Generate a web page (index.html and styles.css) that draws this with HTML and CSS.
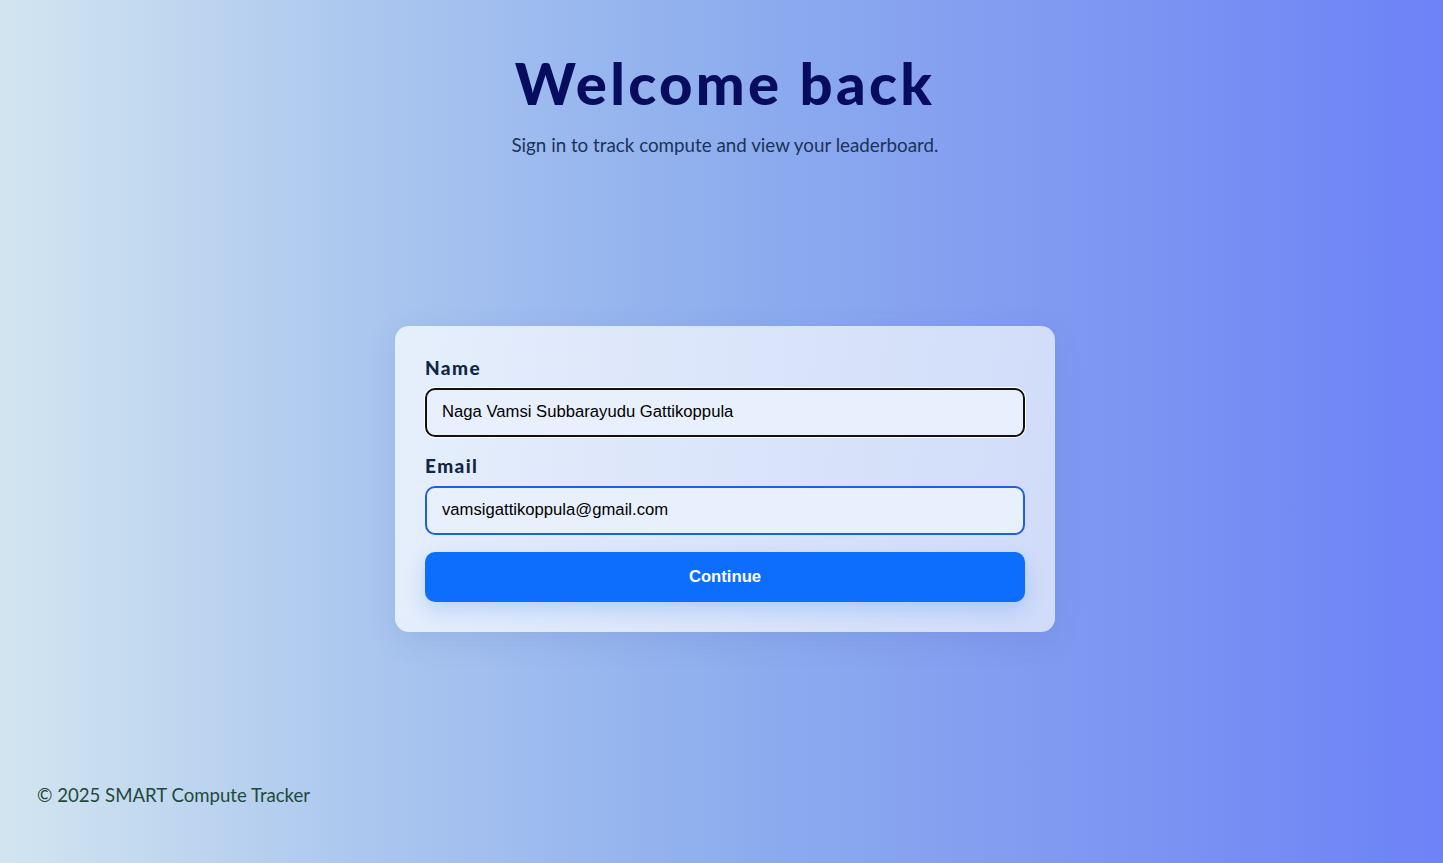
FILE: index.html
```html
<!DOCTYPE html>
<html lang="en">
<head>
<meta charset="utf-8">
<title>Welcome back</title>
<link rel="stylesheet" href="styles.css">
</head>
<body>
<div class="page">
  <header class="hero">
    <h1 class="title">Welcome back</h1>
    <p class="subtitle">Sign in to track compute and view your leaderboard.</p>
  </header>
  <main class="main">
    <form class="card">
      <label class="label" for="name">Name</label>
      <input class="input input-focus" id="name" type="text" value="Naga Vamsi Subbarayudu Gattikoppula">
      <label class="label" for="email">Email</label>
      <input class="input input-blue" id="email" type="email" value="vamsigattikoppula@gmail.com">
      <button class="btn" type="button">Continue</button>
    </form>
  </main>
  <footer class="footer">© 2025 SMART Compute Tracker</footer>
</div>
</body>
</html>
```
FILE: styles.css
```css
* { box-sizing: border-box; }
html, body { margin: 0; padding: 0; }
body {
  font-family: "Lato", "Open Sans", sans-serif;
  background: linear-gradient(90deg, #d3e5f0 0%, #abc7ef 25%, #8eaeee 50%, #7f98f1 75%, #6c82f7 100%);
  min-height: 100vh;
}
.page {
  min-height: 863px;
  display: flex;
  flex-direction: column;
  padding-left: 7px;
}
.hero {
  text-align: center;
  padding-top: 48px;
}
.title {
  margin: 0;
  font-size: 58px;
  font-weight: 900;
  color: #070c5e;
  line-height: 70px;
  letter-spacing: 3.3px;
}
.subtitle {
  margin: 15px 0 0;
  font-size: 18.8px;
  color: #1c3358;
  line-height: 24px;
}
.main {
  flex: 1;
  display: flex;
  justify-content: center;
  align-items: flex-start;
  padding-top: 169px;
}
.card {
  width: 660px;
  padding: 30px 30px 30px;
  border-radius: 14px;
  background: linear-gradient(100deg, rgba(235,242,252,0.92) 0%, rgba(215,225,250,0.92) 100%);
  box-shadow: 0 8px 30px rgba(60,80,160,0.12);
  display: flex;
  flex-direction: column;
}
.label {
  font-size: 19px;
  font-weight: 900;
  color: #0f2746;
  line-height: 24px;
  margin: 0 0 8px;
  letter-spacing: 1.4px;
}
.input {
  width: 600px;
  height: 49px;
  border-radius: 10px;
  background: #e9f0fd;
  font-family: "Liberation Sans", Arial, sans-serif;
  font-size: 16.67px;
  color: #000;
  padding: 0 15px 2px;
  margin: 0 0 17px;
  outline: none;
}
.input-focus {
  border: 2px solid #111;
  box-shadow: 0 0 0 1px #fff;
}
.input-blue {
  border: 2px solid #1d63d8;
  margin-bottom: 17px;
}
.btn {
  width: 600px;
  height: 50px;
  border: none;
  border-radius: 10px;
  background: #0d6efd;
  color: #fff;
  font-family: "Liberation Sans", Arial, sans-serif;
  font-weight: 700;
  font-size: 16.67px;
  box-shadow: 0 8px 20px rgba(13,110,253,0.2);
}
.footer {
  padding: 0 0 56px 30px;
  font-size: 18.6px;
  color: #1d4a3b;
  line-height: 24px;
}
```
